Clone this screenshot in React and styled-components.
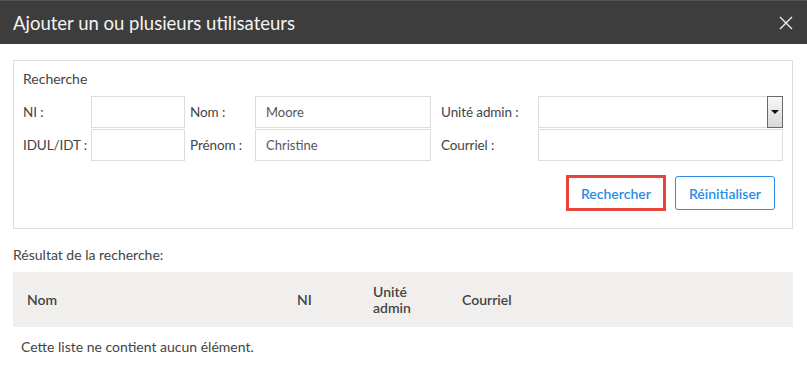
import React from "react";
import styled, { createGlobalStyle } from "styled-components";

const Global = createGlobalStyle`
  body {
    margin: 0;
    background: #fff;
    font-family: "Source Sans Pro", Lato, "Liberation Sans", sans-serif;
    color: #444;
  }
`;

const Modal = styled.div`
  width: 807px;
  height: 370px;
  background: #fff;
  overflow: hidden;
`;

const Header = styled.div`
  height: 44px;
  background: #3d3d3d;
  border-top: 1px solid #555;
  box-sizing: border-box;
  display: flex;
  align-items: center;
  justify-content: space-between;
  padding: 0 14px 0 13px;
`;

const Title = styled.h1`
  margin: 0;
  font-size: 18.5px;
  font-weight: 400;
  color: #f4f4f4;
`;

const Close = styled.button`
  background: none;
  border: none;
  padding: 0;
  width: 14px;
  height: 14px;
  display: flex;
  cursor: pointer;
`;

const Body = styled.div`
  padding: 16px 14px 0 13px;
`;

const Panel = styled.fieldset`
  margin: 0;
  border: 1px solid #ddd;
  padding: 8px 8px 17px 9px;
  min-width: 0;
`;

const Legend = styled.div`
  font-size: 14px;
  line-height: 20px;
  color: #444;
  margin-bottom: 7px;
`;

const Grid = styled.div`
  display: grid;
  grid-template-columns: 68px 94px 70px 176px 107px 245px;
  row-gap: 1px;
  align-items: center;
`;

const Label = styled.label`
  font-size: 13.5px;
  color: #444;
  padding-left: ${(p) => (p.$first ? "0" : p.$wide ? "10px" : "5px")};
  white-space: nowrap;
  letter-spacing: -0.1px;
`;

const Input = styled.input`
  box-sizing: border-box;
  height: 32px;
  width: 100%;
  border: 1px solid #ddd;
  padding: 0 10px;
  font-family: inherit;
  font-size: 13px;
  color: #555;
  outline: none;
`;

const SelectBox = styled.div`
  position: relative;
  height: 32px;
  border: 1px solid #ddd;
  box-sizing: border-box;
`;

const SelectArrow = styled.div`
  position: absolute;
  right: -1px;
  top: -1px;
  width: 16px;
  height: 32px;
  box-sizing: border-box;
  border: 1px solid #6a6a6a;
  background: linear-gradient(#f8f8f8, #d8d8d8);
  display: flex;
  align-items: center;
  justify-content: center;

  &::after {
    content: "";
    border-left: 4px solid transparent;
    border-right: 4px solid transparent;
    border-top: 4px solid #111;
  }
`;

const Actions = styled.div`
  display: flex;
  justify-content: flex-end;
  gap: 9px;
  margin: 14px 9px 0 0;
`;

const Button = styled.button`
  box-sizing: border-box;
  height: ${(p) => (p.$focus ? "36px" : "34px")};
  margin-top: ${(p) => (p.$focus ? "0" : "1px")};
  padding: 0 ${(p) => (p.$focus ? "12px" : "13px")};
  background: #fff;
  border: ${(p) => (p.$focus ? "3px solid #e8443b" : "1px solid #2a8ce6")};
  border-radius: ${(p) => (p.$focus ? "0" : "3px")};
  color: #2a8ce6;
  font-family: inherit;
  font-size: 14px;
  font-weight: 600;
  cursor: pointer;
`;

const ResultTitle = styled.div`
  font-size: 14px;
  color: #444;
  margin-top: 16px;
  line-height: 20px;
`;

const Table = styled.table`
  width: 100%;
  table-layout: fixed;
  border-collapse: collapse;
  margin-top: 7px;
`;

const Th = styled.th`
  box-sizing: border-box;
  background: #f1efee;
  height: 55px;
  text-align: left;
  font-size: 14px;
  font-weight: 600;
  color: #444;
  line-height: 16px;
  padding: 0 14px;
  width: ${(p) => p.$w || "auto"};
`;

const Empty = styled.td`
  font-size: 14px;
  color: #444;
  padding: 11px 8px;
`;

export default function App() {
  return (
    <Modal>
      <Global />
      <Header>
        <Title>Ajouter un ou plusieurs utilisateurs</Title>
        <Close aria-label="Fermer">
          <svg width="14" height="14" viewBox="0 0 14 14">
            <path d="M1 1 L13 13 M13 1 L1 13" stroke="#eee" strokeWidth="1.4" />
          </svg>
        </Close>
      </Header>
      <Body>
        <Panel>
          <Legend>Recherche</Legend>
          <Grid>
            <Label $first>NI :</Label>
            <Input />
            <Label>Nom :</Label>
            <Input defaultValue="Moore" />
            <Label $wide>Unité admin :</Label>
            <SelectBox>
              <SelectArrow />
            </SelectBox>
            <Label $first>IDUL/IDT :</Label>
            <Input />
            <Label>Prénom :</Label>
            <Input defaultValue="Christine" />
            <Label $wide>Courriel :</Label>
            <Input />
          </Grid>
          <Actions>
            <Button $focus>Rechercher</Button>
            <Button>Réinitialiser</Button>
          </Actions>
        </Panel>
        <ResultTitle>Résultat de la recherche:</ResultTitle>
        <Table>
          <thead>
            <tr>
              <Th $w="270px">Nom</Th>
              <Th $w="76px">NI</Th>
              <Th $w="89px">
                Unité
                <br />
                admin
              </Th>
              <Th>Courriel</Th>
            </tr>
          </thead>
          <tbody>
            <tr>
              <Empty colSpan={4}>Cette liste ne contient aucun élément.</Empty>
            </tr>
          </tbody>
        </Table>
      </Body>
    </Modal>
  );
}
